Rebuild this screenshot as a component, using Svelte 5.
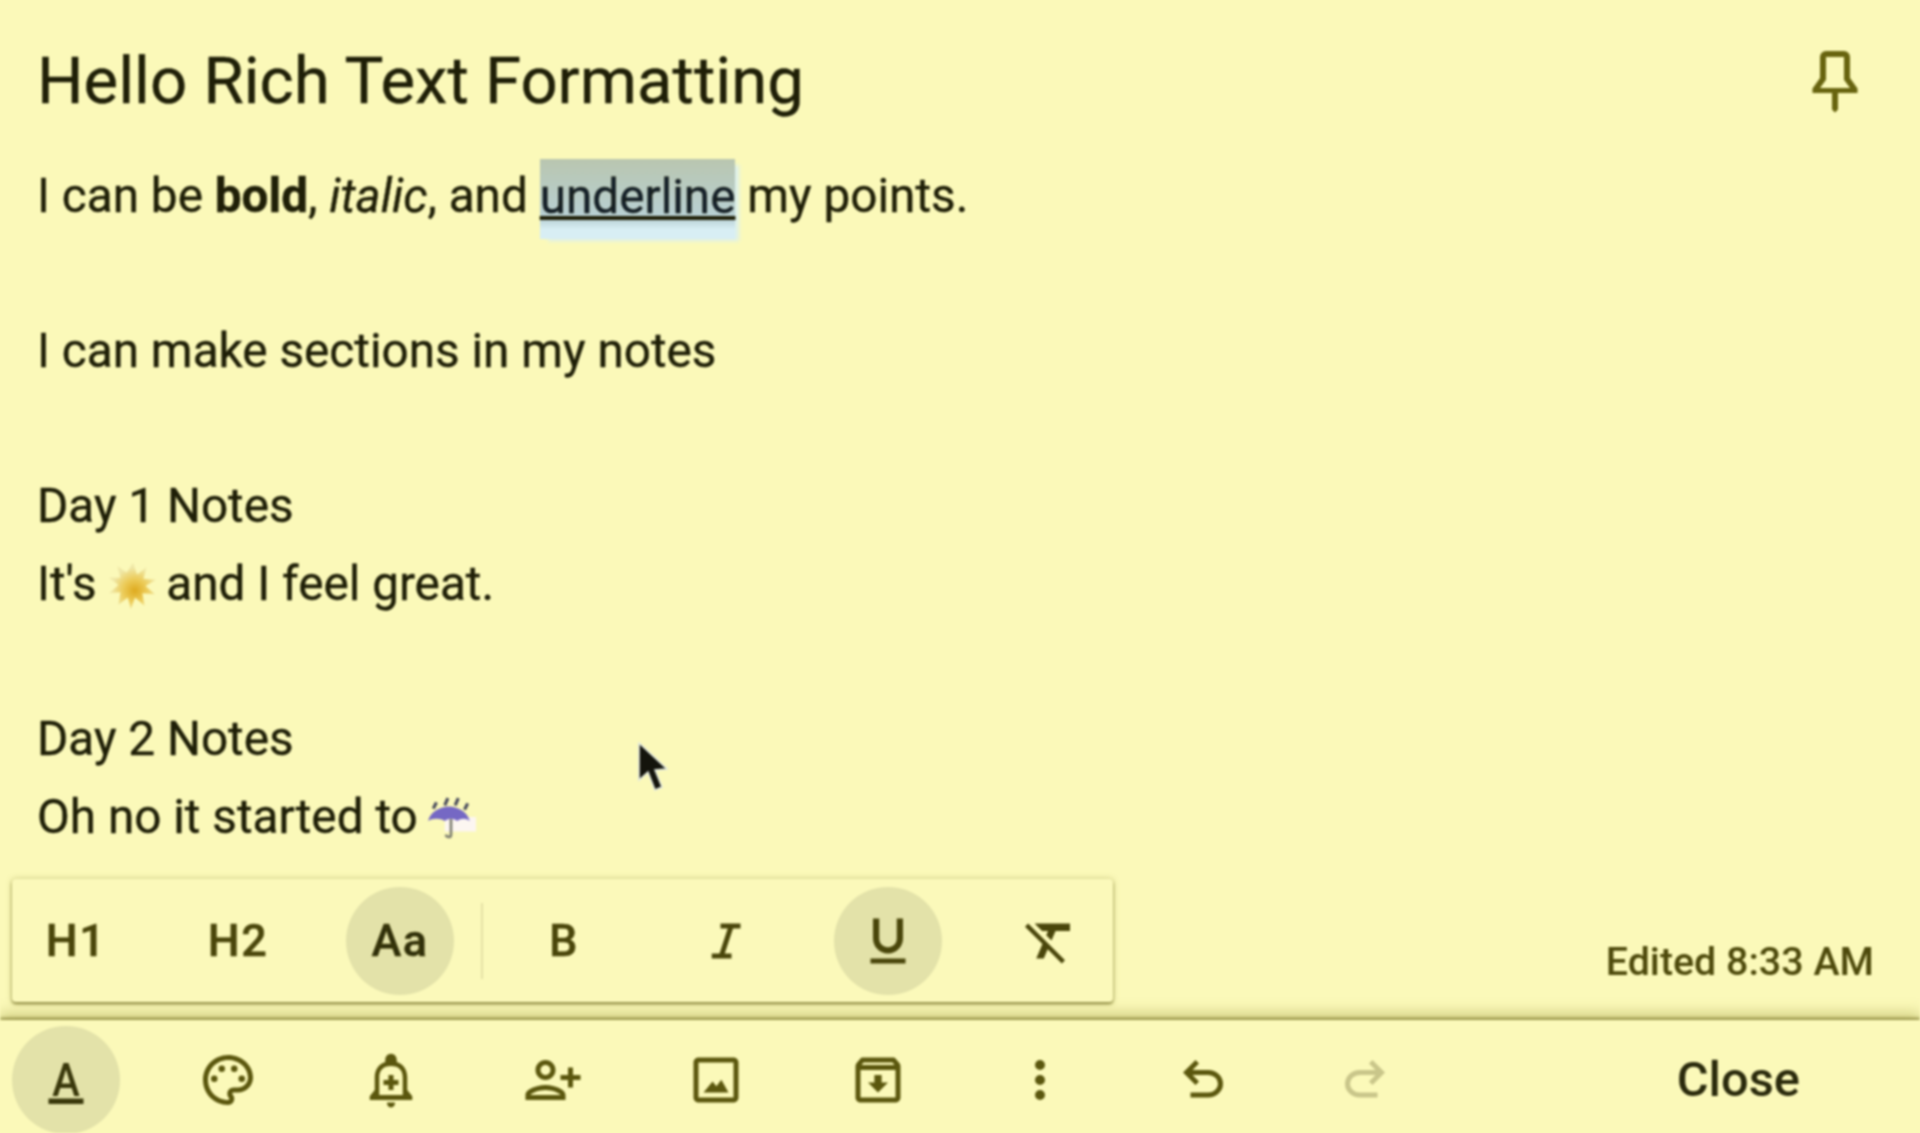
<script>
	// material-style paths, 24 unit box
	const formatIcons = {
		italic: 'M9.800 5v2h2.900l-3.300 10H6.300v2h7.900v-2h-2.700l3.300-10h3V5z',
		underline: 'M12 17c3.31 0 6-2.69 6-6V3h-2.5v8c0 1.93-1.57 3.5-3.5 3.5S8.5 12.93 8.5 11V3H6v8c0 3.31 2.69 6 6 6zm-7 2v2h14v-2H5z',
		clear: 'M3.27 5L2 6.27l6.97 6.97L6.5 19h3l1.57-3.66L16.73 21 18 19.73 3.55 5.27 3.27 5zM6 5v.18L8.82 8h2.4l-.72 1.68 2.1 2.1L14.21 8H20V5H6z'
	};

	const barIcons = [
		{ name: 'text', active: true, d: 'M5 19.400h14v2.200H5zM11 5.200h2l4.400 13.200h-2.100l-1-3.200H9.700l-1 3.200H6.600L11 5.200zm-.7 8.200h3.400L12 7.800l-1.700 5.600z' },
		{ name: 'palette', d: 'M12 22C6.49 22 2 17.51 2 12S6.49 2 12 2s10 4.04 10 9c0 3.31-2.69 6-6 6h-1.77c-.28 0-.5.22-.5.5 0 .12.05.23.13.33.41.47.64 1.06.64 1.67 0 1.38-1.12 2.5-2.5 2.5zm0-18c-4.41 0-8 3.59-8 8s3.59 8 8 8c.28 0 .5-.22.5-.5 0-.16-.08-.28-.14-.35-.41-.46-.63-1.05-.63-1.65 0-1.38 1.12-2.5 2.5-2.5H16c2.21 0 4-1.79 4-4 0-3.86-3.59-7-8-7zM6.500 10.200a1.300 1.300 0 1 1 0 2.600 1.300 1.300 0 0 1 0-2.600zm3-4a1.300 1.300 0 1 1 0 2.600 1.300 1.300 0 0 1 0-2.600zm5 0a1.300 1.300 0 1 1 0 2.600 1.300 1.300 0 0 1 0-2.600zm3 4a1.300 1.300 0 1 1 0 2.600 1.300 1.300 0 0 1 0-2.600z' },
		{ name: 'remind', d: 'M12 23c1.100 0 1.600-.9 1.600-2h-3.200c0 1.100.5 2 1.600 2zm6.500-7v-5c0-3-1.500-5.400-4.200-6.200V4c0-1.400-1-2.500-2.300-2.500S9.700 2.600 9.700 4v.8C7 5.600 5.500 8 5.500 11v5l-2 2.500V20h17v-1.500l-2-2.500zm-1.800 2H7.300v-7c0-2.800 1.500-4.600 4.700-4.600s4.700 1.800 4.700 4.600v7zm-3.700-8h-2v2H9v2h2v2h2v-2h2v-2h-2v-2z' },
		{ name: 'collab', d: 'M13 8c0-2.21-1.79-4-4-4S5 5.79 5 8s1.79 4 4 4 4-1.79 4-4zm-2 0c0 1.1-.9 2-2 2s-2-.9-2-2 .9-2 2-2 2 .9 2 2zM1 18v2h16v-2c0-2.66-5.33-4-8-4s-8 1.34-8 4zm2 0c.2-.71 3.3-2 6-2 2.69 0 5.77 1.28 6 2H3zm17-3v-3h3v-2h-3V7h-2v3h-3v2h3v3h2z' },
		{ name: 'image', d: 'M19 5v14H5V5h14m0-2H5c-1.1 0-2 .9-2 2v14c0 1.1.9 2 2 2h14c1.1 0 2-.9 2-2V5c0-1.100-.9-2-2-2zm-4.860 8.860l-2 2.600-1.500-1.900L7 17h10l-2.860-5.140z' },
		{ name: 'archive', d: 'M20.540 5.230l-1.390-1.680C18.880 3.210 18.470 3 18 3H6c-.47 0-.88.21-1.160.55L3.460 5.230C3.170 5.570 3 6.020 3 6.500V19c0 1.100.9 2 2 2h14c1.100 0 2-.9 2-2V6.500c0-.48-.17-.93-.46-1.270zM6.240 5h11.520l.83 1H5.420l.82-1zM5 19V8h14v11H5zm8.450-9h-2.900v3H8l4 4 4-4h-2.550z' },
		{ name: 'more', d: 'M12 8a2 2 0 1 0 0-4 2 2 0 0 0 0 4zm0 2a2 2 0 1 0 0 4 2 2 0 0 0 0-4zm0 6a2 2 0 1 0 0 4 2 2 0 0 0 0-4z' },
		{ name: 'undo', d: 'M7 19v-2h7.100q1.575 0 2.738-1T18 13.500q0-1.500-1.162-2.500T14.100 10H7.800l2.600 2.600L9 14 4 9l5-5 1.400 1.400L7.800 8h6.300q2.425 0 4.163 1.575T20 13.500q0 2.350-1.738 3.925T14.100 19H7z' },
		{ name: 'redo', faded: true, d: 'M9.900 19q-2.425 0-4.163-1.575T4 13.500q0-2.350 1.737-3.925T9.900 8h6.300l-2.600-2.600L15 4l5 5-5 5-1.400-1.400 2.600-2.600H9.900q-1.575 0-2.738 1T6 13.500q0 1.500 1.162 2.500T9.900 17H17v2H9.900z' }
	];
</script>

<div class="page">
	<main class="note">
		<header class="head">
			<h1>Hello Rich Text Formatting</h1>
			<svg class="pin" viewBox="0 0 24 24"><path d="M17 4a2 2 0 0 0-2-2H9a2 2 0 0 0-2 2v7l-2.500 3.500V16H11v5.500l1 1 1-1V16h6.500v-1.500L17 11V4zM7 14.300l2-2.700V4h6v7.600l2 2.700H7z" /></svg>
		</header>

		<div class="body">
			<p>I can be <b>bold</b>, <i>italic</i>, and <span class="selected"><u>underline</u></span> my points.</p>
			<p class="blank"></p>
			<p>I can make sections in my notes</p>
			<p class="blank"></p>
			<p>Day 1 Notes</p>
			<p>It's
				<svg class="emoji" viewBox="0 0 48 48">
					<defs>
						<radialGradient id="sun" cx="0.55" cy="0.6">
							<stop offset="0" stop-color="#deaa1e" />
							<stop offset="0.5" stop-color="#eccb58" />
							<stop offset="1" stop-color="#efe7a6" />
						</radialGradient>
					</defs>
					<path fill="url(#sun)" d="M24 2l4 11 9-7-3 11 12 1-10 6 9 8-12-1 2 12-9-8-4 11-3-11-9 7 2-12-11 1 9-8-9-7 11 0-3-11 9 6z" />
				</svg>
				and I feel great.</p>
			<p class="blank"></p>
			<p>Day 2 Notes</p>
			<p>Oh no it started to
				<svg class="emoji rain" viewBox="0 0 48 48">
					<path fill="#fdf5ff" d="M18 22h30v14H18z" opacity="0.8" />
					<path fill="#7568c4" d="M2 26c2-9 12-14 20-14s18 5 20 14c-4-3-8-3-12 0-4-3-8-3-12 0-4-3-12-3-16 0z" />
					<path fill="none" stroke="#7d7e70" stroke-width="2.500" d="M24 24v15c0 3-4 3-5 0" />
					<path fill="none" stroke="#46485a" stroke-width="3" d="M10 8l-3 6M21 4l-3 7M31 4l-3 7M40 9l-3 6" />
				</svg>
			</p>
		</div>

		<div class="edited">Edited 8:33 AM</div>

		<div class="format-bar">
			<button class="fmt text">H1</button>
			<button class="fmt text">H2</button>
			<button class="fmt text on">Aa</button>
			<span class="divider"></span>
			<button class="fmt text">B</button>
			<button class="fmt" aria-label="italic"><svg viewBox="0 0 24 24"><path d={formatIcons.italic} /></svg></button>
			<button class="fmt on" aria-label="underline"><svg viewBox="0 0 24 24"><path d={formatIcons.underline} /></svg></button>
			<button class="fmt" aria-label="clear"><svg viewBox="0 0 24 24"><path d={formatIcons.clear} /></svg></button>
		</div>

		<svg class="cursor" viewBox="0 0 30 52">
			<path fill="#14140c" stroke="#dfe6df" stroke-width="1.500" d="M1 1l0 37 9-8 7 18 7-3-7-17 12-1z" />
		</svg>
	</main>

	<footer class="bar">
		<div class="tools">
			{#each barIcons as icon}
				<button class="tool" class:on={icon.active} class:faded={icon.faded} aria-label={icon.name}>
					<svg viewBox="0 0 24 24"><path d={icon.d} /></svg>
				</button>
			{/each}
		</div>
		<button class="close">Close</button>
	</footer>
</div>

<style>
	:global(body) {
		margin: 0;
		background: #fbf9b9;
	}

	.page {
		display: flex;
		flex-direction: column;
		height: 1133px;
		overflow: hidden;
		background: #fbf9b9;
		color: #1f1f07;
		font-family: Roboto, "Liberation Sans", sans-serif;
		filter: blur(0.9px);
	}

	.note {
		position: relative;
		flex: 1;
		display: flex;
		flex-direction: column;
		padding: 0 46px 36px 37px;
	}

	.head {
		display: flex;
		align-items: center;
		justify-content: space-between;
		height: 158px;
		margin-right: 3px;
		padding-top: 3px;
		box-sizing: border-box;
	}

	h1 {
		margin: 0;
		font-size: 65.3px;
		font-weight: 400;
		color: #1f1f07;
		-webkit-text-stroke: 0.4px #1f1f07;
	}

	.pin {
		width: 72px;
		height: 72px;
		fill: #68640f;
	}

	.body {
		font-size: 47.7px;
		line-height: 77.6px;
		-webkit-text-stroke: 0.4px #1f1f07;
	}

	.body p {
		margin: 0;
		height: 77.6px;
	}

	.selected {
		display: inline-block;
		height: 80px;
		margin-top: 1px;
		background: linear-gradient(#b9c6b0 0, #b8d0d4 74%, #d8eef4 88%, #d8eef4 100%);
		box-shadow: 6px 4px 4px -2px #dcf0ee;
		vertical-align: top;
		color: #14202a;
	}

	.emoji {
		width: 50px;
		height: 50px;
		vertical-align: -11px;
		margin: 0 -4px 0 0;
	}

	.emoji.rain {
		margin-left: -4px;
	}

	.edited {
		margin-top: auto;
		align-self: flex-end;
		font-size: 39.4px;
		font-weight: 500;
		line-height: 44px;
		color: #4e4a0c;
	}

	.format-bar {
		position: absolute;
		left: 12px;
		top: 879px;
		display: flex;
		align-items: center;
		gap: 54px;
		height: 123px;
		box-sizing: border-box;
		padding: 0 9px 0 10px;
		background: #fbf9ba;
		border-radius: 4px;
		box-shadow: 0 2px 3px rgba(100, 95, 20, 0.7), 0 0 6px rgba(130, 125, 40, 0.35);
		z-index: 2;
	}

	button {
		border: 0;
		padding: 0;
		margin: 0;
		background: none;
		color: inherit;
		font: inherit;
	}

	.fmt {
		display: flex;
		align-items: center;
		justify-content: center;
		width: 108px;
		height: 108px;
		border-radius: 50%;
	}

	.fmt svg {
		width: 60px;
		height: 60px;
		fill: #4a460b;
	}

	.fmt.text {
		font-size: 45px;
		font-weight: 500;
		letter-spacing: 1.5px;
		color: #4a460b;
		-webkit-text-stroke: 0.5px #4a460b;
	}

	.fmt.on {
		background: #e3e2a9;
	}

	.fmt.text.on {
		color: #2f2e0a;
	}

	.divider {
		width: 2px;
		height: 76px;
		margin: 0 -27px;
		background: #e4e1a6;
	}

	.cursor {
		position: absolute;
		left: 638px;
		top: 742px;
		width: 30px;
		height: 52px;
	}

	.bar {
		position: relative;
		display: flex;
		align-items: center;
		justify-content: space-between;
		height: 113px;
		box-sizing: border-box;
		padding: 6px 120px 0 12px;
		background: #fbf9b9;
		box-shadow: 0 -2px 3px rgba(110, 105, 30, 0.7), 0 -8px 12px rgba(150, 145, 50, 0.35);
	}

	.tools {
		display: flex;
		gap: 54.400px;
	}

	.tool {
		display: flex;
		align-items: center;
		justify-content: center;
		width: 108px;
		height: 108px;
		border-radius: 50%;
	}

	.tool svg {
		width: 60px;
		height: 60px;
		fill: #5b570e;
	}

	.tool.on {
		background: #e3e2a9;
	}

	.tool.on svg {
		fill: #3a380b;
	}

	.tool.faded svg {
		fill: #c9c68a;
	}

	.close {
		font-size: 48.8px;
		font-weight: 500;
		color: #2a2a0c;
	}
</style>
